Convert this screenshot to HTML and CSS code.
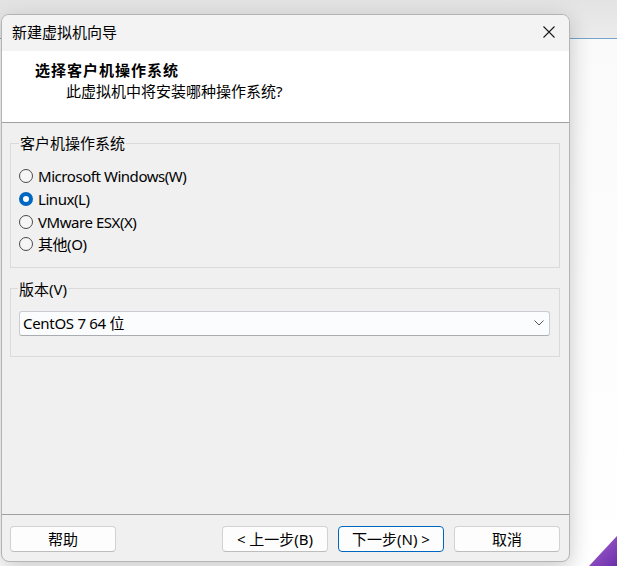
FILE: index.html
```html
<!DOCTYPE html>
<html lang="zh-CN">
<head>
  <meta charset="UTF-8" />
  <title>新建虚拟机向导</title>
  <link rel="stylesheet" href="styles.css">
</head>
<body>

  <div class="dialog">
    <div class="titlebar">
      <span class="title">新建虚拟机向导</span>
      <svg class="close" width="12" height="12" viewBox="0 0 12 12">
        <path d="M0.5 0.5 L11.5 11.5 M11.5 0.5 L0.5 11.5" stroke="#1b1b1b" stroke-width="1.1" fill="none"/>
      </svg>
    </div>

    <div class="header">
      <div class="header-title">选择客户机操作系统</div>
      <div class="header-sub">此虚拟机中将安装哪种操作系统?</div>
    </div>

    <div class="content">
      <fieldset class="group">
        <legend>客户机操作系统</legend>
        <label class="radio"><span class="dot"></span>Microsoft Windows(W)</label>
        <label class="radio"><span class="dot checked"></span>Linux(L)</label>
        <label class="radio"><span class="dot"></span>VMware ESX(X)</label>
        <label class="radio"><span class="dot"></span>其他(O)</label>
      </fieldset>

      <fieldset class="group version">
        <legend>版本(V)</legend>
        <div class="select">
          <span>CentOS 7 64 位</span>
          <svg width="10" height="6" viewBox="0 0 10 6">
            <path d="M0.5 0.5 L5 5 L9.5 0.5" stroke="#555" stroke-width="1" fill="none"/>
          </svg>
        </div>
      </fieldset>
    </div>

    <div class="footer">
      <button class="btn">帮助</button>
      <div class="spacer"></div>
      <button class="btn">&lt; 上一步(B)</button>
      <button class="btn primary">下一步(N) &gt;</button>
      <button class="btn">取消</button>
    </div>
  </div>

  <div class="corner"></div>

</body>
</html>
```

FILE: styles.css
```css
body {
  margin: 0;
  width: 617px;
  height: 566px;
  overflow: hidden;
  position: relative;
  font-family: "Noto Sans", "Noto Sans CJK SC", sans-serif;
  font-size: 15px;
  color: #000;
  background: linear-gradient(to bottom, #e3e3e3 0, #ececec 38px, #76a3cb 38px, #76a3cb 39px, #fafafa 39px, #ffffff 100%);
}

.dialog {
  margin: 14px 0 0 1px;
  width: 569px;
  height: 548px;
  box-sizing: border-box;
  border: 1px solid #b4b4b4;
  border-radius: 8px;
  overflow: hidden;
  background-color: #f0f0f0;
  box-shadow: 0 6px 22px rgba(0, 0, 0, 0.22);
  display: flex;
  flex-direction: column;
}

.titlebar {
  height: 36px;
  flex: none;
  background-color: #f3f3f3;
  display: flex;
  align-items: center;
  justify-content: space-between;
  padding: 0 14px 3px 10px;
  box-sizing: border-box;
}

.title {
  line-height: 20px;
}

.header {
  height: 72px;
  flex: none;
  box-sizing: border-box;
  background-color: #fff;
  border-bottom: 1px solid #a0a0a0;
  padding: 9px 0 0 33px;
  line-height: 21px;
}

.header-title {
  font-weight: bold;
  letter-spacing: 1px;
}

.header-sub {
  padding-left: 31px;
}

.content {
  flex: 1;
  padding: 10px 9px 0 8px;
}

.group {
  margin: 0;
  border: 1px solid #dadada;
  padding: 1px 9px 11px 9px;
}

.group legend {
  padding: 0 1px;
  line-height: 20px;
  margin-left: -1px;
}

.radio {
  display: flex;
  align-items: center;
  height: 22.7px;
  line-height: 20px;
  letter-spacing: -0.45px;
}

.radio:first-of-type {
  margin-top: 11px;
}

.dot {
  width: 14px;
  height: 14px;
  box-sizing: border-box;
  border: 1px solid #4a4a4a;
  border-radius: 50%;
  background-color: #f6f6f6;
  margin: 0 5px 0 -1px;
}

.dot.checked {
  border: 4.5px solid #0067c0;
  background-color: #fff;
}

.version {
  margin-top: 11px;
  padding: 1px 9px 20px 8px;
}

.select {
  margin-top: 11px;
  height: 25px;
  box-sizing: border-box;
  background-color: #fbfcfd;
  border: 1px solid #c9cdd2;
  border-bottom-color: #a9acb0;
  border-radius: 3px;
  display: flex;
  align-items: center;
  justify-content: space-between;
  padding: 0 5px 0 3px;
  line-height: 20px;
  letter-spacing: -0.3px;
}

.footer {
  height: 47px;
  flex: none;
  box-sizing: border-box;
  border-top: 1px solid #a0a0a0;
  padding: 11px 9px 0 8px;
  display: flex;
  gap: 10px;
}

.spacer {
  flex: 1;
}

.btn {
  width: 106px;
  height: 26px;
  padding: 0;
  font-family: inherit;
  font-size: 15px;
  line-height: 20px;
  color: #000;
  background-color: #fdfdfd;
  border: 1px solid #d2d2d2;
  border-bottom-color: #bdbdbd;
  border-radius: 4px;
}

.btn.primary {
  border: 1px solid #0067c0;
}

.corner {
  position: absolute;
  right: 0;
  bottom: 0;
  width: 28px;
  height: 30px;
  clip-path: polygon(100% 0, 100% 100%, 0 100%);
  background: linear-gradient(135deg, #a765d6, #6c2ea8);
}
```
